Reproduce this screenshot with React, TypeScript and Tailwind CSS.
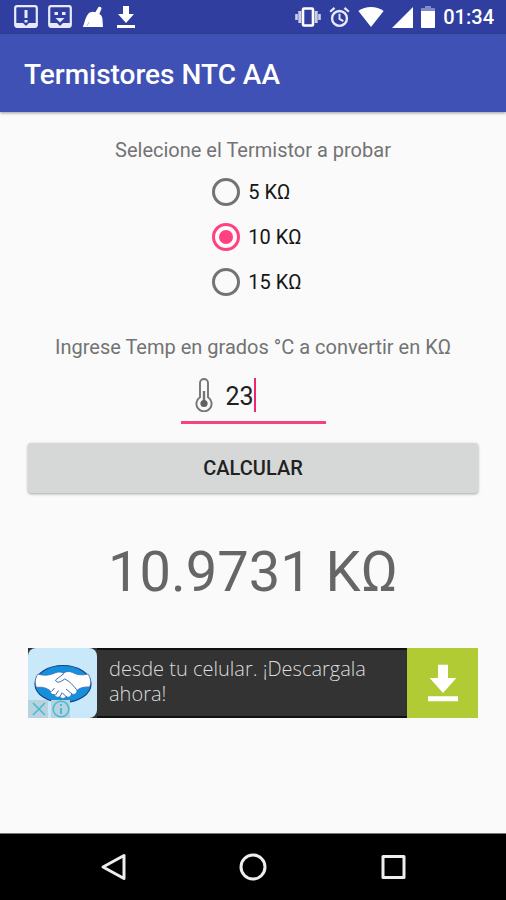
import { useState } from 'react'

/* Status bar glyphs */
const NoticeIcon = () => (
  <svg width="24" height="24" viewBox="0 0 24 24" fill="none" stroke="#e8eafc">
    <rect x="1.2" y="1.2" width="21.6" height="20.6" rx="2" strokeWidth="2.2" />
    <path d="M2 18h7l3 3 3-3h7v4H2z" fill="#e8eafc" stroke="none" />
    <path d="M12 5v8M12 15v2.500" strokeWidth="3" />
  </svg>
)

const FaceIcon = () => (
  <svg width="24" height="24" viewBox="0 0 24 24" fill="none" stroke="#e8eafc">
    <rect x="1.2" y="1.2" width="21.6" height="20.6" rx="2" strokeWidth="2.2" />
    <path d="M2 18h7l3 3 3-3h7v4H2z" fill="#e8eafc" stroke="none" />
    <path d="M6.500 8.500h3.500M14 8.500h3.500" strokeWidth="3.200" />
    <path d="M7.500 13h9L12 17.500z" fill="#e8eafc" stroke="none" />
  </svg>
)

const BroomIcon = () => (
  <svg width="22" height="22" viewBox="0 0 22 22" fill="#fff">
    <path d="M16.500 1c1-.9 3.500.2 3 1.700l-2.200 5.400c2 1 3 2.600 3 4.900L7.500 7c2-1.500 4-1.600 5.800-.7z" />
    <path d="M7.600 6.600 20.400 12.500l.6 8.500H.8C2.600 18 3 10.500 7.600 6.600z" />
    <path d="m5 20 2-4" stroke="#9fa8da" strokeWidth=".8" />
  </svg>
)

const DownloadIcon = ({ size }: { size: number }) => (
  <svg width={size} height={size} viewBox="0 0 24 24" fill="#fff">
    <path d="M9 1h6v8h5l-8 9-8-9h5z M3 20h18v3H3z" />
  </svg>
)

const VibrateIcon = () => (
  <svg width="26" height="22" viewBox="1 0 26 22" fill="none" stroke="#fff">
    <rect x="9" y="2.500" width="10" height="17" rx="1" strokeWidth="2.600" />
    <path d="M5.800 5v12M22.200 5v12" strokeWidth="3" opacity=".75" />
    <path d="M2.500 8v6M25.500 8v6" strokeWidth="2.600" opacity=".75" />
  </svg>
)

const AlarmIcon = () => (
  <svg width="21" height="22" viewBox="0 0 22 22" fill="none" stroke="#e8eafc">
    <circle cx="11" cy="12.500" r="7.800" strokeWidth="2.500" />
    <path d="M11 7.500V13l4 2.300" strokeWidth="2" />
    <path d="m1.200 5.500 4.600-4M20.800 5.500l-4.600-4" strokeWidth="2.400" />
  </svg>
)

const WifiIcon = () => (
  <svg width="26" height="20" viewBox="0 0 26 20" fill="#fff">
    <path d="M13 20 .4 4C7.500-1.300 18.500-1.300 25.600 4z" />
  </svg>
)

const SignalIcon = () => (
  <svg width="21" height="21" viewBox="0 0 21 21" fill="#fff">
    <path d="M21 0v21H0z" />
  </svg>
)

const BatteryIcon = () => (
  <svg width="14" height="22" viewBox="0 0 14 22" fill="#fff">
    <path d="M4 0h6v2h3c.6 0 1 .4 1 1v2H0V3c0-.6.4-1 1-1h3z" opacity=".4" />
    <path d="M0 5h14v16c0 .6-.4 1-1 1H1c-.6 0-1-.4-1-1z" />
  </svg>
)

const ThermometerIcon = () => (
  <svg width="18" height="34" viewBox="0 0 18 34" fill="none" stroke="#757575">
    <path d="M5 19.300V5a4 4 0 0 1 8 0v14.300a7.600 7.600 0 1 1-8 0z" strokeWidth="1.900" />
    <path d="M9 13v12" strokeWidth="2.400" />
    <circle cx="9" cy="25.500" r="3.600" fill="#616161" stroke="none" />
  </svg>
)

/* Advertiser logo */
const HandshakeLogo = () => (
  <svg width="58" height="40" viewBox="0 0 58 40">
    <ellipse cx="29" cy="20" rx="28" ry="18.500" fill="#1590dc" stroke="#1c3f86" strokeWidth="1.200" />
    <path
      d="M4 10c6 2 12 1.500 18-1.500 3-1 5-.5 7.500.5 3-1.800 6-2 9-.5 5 2.500 9 3 15.500 1.500 3 4.500 3.500 9 1.500 13-6-.5-10 1-12.500 3.500 0 3.500-3 4.500-5.500 3.500-.5 3-3 4-5.500 2.500-1.500 2.500-5 2.500-6 0-2 1.500-5 .5-5.500-2-2.500.5-4.500-1-4-3.500C13 24 8 22.500 2.500 23.500.5 19 1 14 4 10z"
      fill="#fff"
      stroke="#3c6bb0"
      strokeWidth=".8"
    />
    <path
      d="M30 9.500 21.500 16c1 3.500 5 2.500 9-1 5 2 9.500 7 13 12M38 30l-6-5M32.500 33 28 28.500"
      fill="none"
      stroke="#3c6bb0"
      strokeWidth="1"
    />
    <path d="m26 32.500 2-3.500M21.500 31l3-4.500M17.500 27.500l3-3.500" stroke="#3c6bb0" strokeWidth="1" />
  </svg>
)

const AdChoicesIcons = () => (
  <svg width="44" height="18" viewBox="0 0 44 18" fill="none" stroke="#49b9d6" strokeWidth="1.600">
    <path d="M0 0h20v18H0zM23 0h19v18H23z" fill="#b9d3de" stroke="none" />
    <path d="m5 3 12 12M17 3 5 15" />
    <circle cx="33" cy="9" r="7.800" />
    <path d="M33 8v6M33 4v2" strokeWidth="2" />
  </svg>
)

const THERMISTORS = [5, 10, 15]
const BETA = 4099.8

// resistance in KΩ of an NTC rated at 25 °C
function resistance(nominal: number, celsius: number) {
  const kelvin = celsius + 273.15
  return nominal * Math.exp(BETA * (1 / kelvin - 1 / 298.15))
}

export default function App() {
  const [nominal, setNominal] = useState(10)
  const [temp, setTemp] = useState('23')
  const [result, setResult] = useState(() => resistance(10, 23))

  return (
    <div className="flex min-h-screen flex-col bg-[#fafafa] font-[Roboto,sans-serif] text-xl leading-6 text-[#737373]">
      {/* Status bar */}
      <div className="flex h-[34px] items-center justify-between bg-[#303f9f] pl-[14px] pr-3 text-white">
        <div className="flex items-center gap-[10px]">
          <NoticeIcon />
          <FaceIcon />
          <BroomIcon />
          <DownloadIcon size={24} />
        </div>
        <div className="flex items-center gap-2">
          <VibrateIcon />
          <AlarmIcon />
          <WifiIcon />
          <SignalIcon />
          <BatteryIcon />
          <span className="font-medium">01:34</span>
        </div>
      </div>

      <header className="flex h-[78px] items-center bg-[#3f51b5] px-6 pt-1 shadow-[0_1px_3px_rgba(0,0,0,0.4)]">
        <h1 className="text-[28px] leading-8 font-medium text-white">Termistores NTC AA</h1>
      </header>

      <main className="flex flex-1 flex-col px-7 pt-[26px]">
        <fieldset className="flex flex-col items-center">
          <legend className="mx-auto mb-[7px]">Selecione el Termistor a probar</legend>
          <div className="flex flex-col">
            {THERMISTORS.map((value) => (
              <label key={value} className="flex h-[45px] items-center text-[#151515]">
                <input
                  type="radio"
                  name="thermistor"
                  value={value}
                  checked={nominal === value}
                  onChange={() => setNominal(value)}
                  className="mx-2 size-7 appearance-none rounded-full border-[3px] border-[#737373] bg-clip-content p-1 checked:border-[#ff4081] checked:bg-[#ff4081]"
                />
                {value} KΩ
              </label>
            ))}
          </div>
        </fieldset>

        <label htmlFor="temp" className="mt-[31px] text-center">
          Ingrese Temp en grados °C a convertir en KΩ
        </label>
        <div className="mx-auto mt-[19px] flex h-[46px] w-[145px] items-start border-b-[3px] border-[#f5427f] pl-[14px]">
          <ThermometerIcon />
          <input
            id="temp"
            inputMode="decimal"
            value={temp}
            onChange={(e) => setTemp(e.target.value)}
            className="ml-[13px] field-sizing-content h-9 min-w-[28px] text-[25px] text-[#212121] caret-transparent outline-none"
          />
          <span className="h-[34px] w-[2px] bg-[#f0266f]" />
        </div>

        <button
          onClick={() => setResult(resistance(nominal, Number(temp)))}
          className="mt-[19px] h-[50px] rounded-[3px] bg-[#d6d7d7] font-medium text-[#212121] shadow-[0_1px_3px_rgba(0,0,0,0.35)]"
        >
          CALCULAR
        </button>

        <output htmlFor="temp" className="mt-[46px] text-center text-[56px] leading-[66px] text-[#666]">
          {result.toFixed(4)} KΩ
        </output>

        {/* Ad banner */}
        <a href="#ad" className="mt-[43px] flex h-[70px] bg-[#333]">
          <div className="relative flex w-[69px] justify-center rounded-lg bg-[#c9e9fa] pt-4">
            <HandshakeLogo />
            <div className="absolute bottom-0 left-0">
              <AdChoicesIcons />
            </div>
          </div>
          <p className="flex-1 border-y-2 border-[#111] pt-[6px] pl-3 font-['Open_Sans',sans-serif] text-xl leading-[25px] font-light text-[#dcdcdc]">
            desde tu celular. ¡Descargala ahora!
          </p>
          <div className="flex w-[71px] items-center justify-center bg-[#b1cb34]">
            <DownloadIcon size={40} />
          </div>
        </a>
      </main>

      {/* Navigation bar */}
      <nav className="flex h-[67px] border-t border-[#777] bg-black px-[43px]">
        <button aria-label="Back" className="flex flex-1 items-center justify-center">
          <svg width="28" height="28" viewBox="0 0 28 28" fill="none" stroke="#eee" strokeWidth="3" strokeLinejoin="round">
            <path d="M25 2.500v23L4 14z" />
          </svg>
        </button>
        <button aria-label="Home" className="flex flex-1 items-center justify-center">
          <svg width="28" height="28" viewBox="0 0 28 28" fill="none" stroke="#eee" strokeWidth="3">
            <circle cx="14" cy="14" r="12" />
          </svg>
        </button>
        <button aria-label="Recent apps" className="flex flex-1 items-center justify-center">
          <svg width="28" height="28" viewBox="0 0 28 28" fill="none" stroke="#eee" strokeWidth="3" strokeLinejoin="round">
            <path d="M4 3.500h21v21H4z" />
          </svg>
        </button>
      </nav>
    </div>
  )
}
